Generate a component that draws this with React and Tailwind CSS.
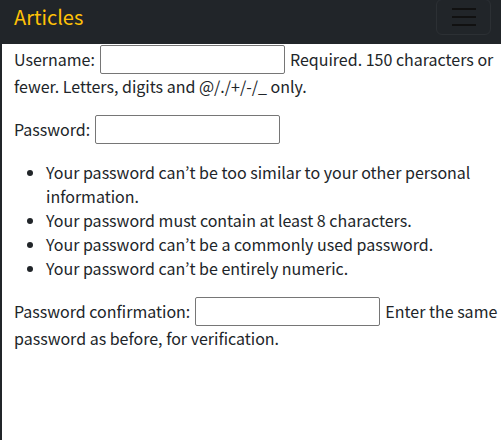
export default function App() {
    return (
        <div className="w-[501px] h-[440px] bg-white border-l-2 border-[#212529] font-['Noto_Sans_CJK_KR',sans-serif] text-[16px] leading-6 text-[#212529] overflow-hidden whitespace-nowrap">
            <nav className="h-[44px] bg-[#212529] flex items-start justify-between pl-3 pr-[10px]">
                <a className="text-[20px] leading-[30px] mt-[2px] text-[#ffc107]">Articles</a>
                <button className="w-[55px] h-[36px] -mt-px border border-[#2c3034] rounded-md flex flex-col items-center justify-center gap-[6px]">
                    <span className="block w-6 h-[2px] bg-[#111]" />
                    <span className="block w-6 h-[2px] bg-[#111]" />
                    <span className="block w-6 h-[2px] bg-[#111]" />
                </button>
            </nav>
            <form className="px-3">
                <div className="mb-4">
                    <div className="flex items-center h-[30px] gap-[5px]">
                        <label className="shrink-0">Username:</label>
                        <input className="shrink-0 w-[185px] h-[29px] border border-[#767676] rounded-[2px]" />
                        <span className="shrink-0">Required. 150 characters or</span>
                    </div>
                    <div>fewer. Letters, digits and @/./+/-/_ only.</div>
                </div>
                <div className="flex items-center h-[30px] gap-[5px] mb-4">
                    <label className="shrink-0">Password:</label>
                    <input type="password" className="shrink-0 w-[185px] h-[29px] border border-[#767676] rounded-[2px]" />
                </div>
                <ul className="list-disc pl-8 mb-4">
                    <li>Your password can’t be too similar to your other personal<br />information.</li>
                    <li>Your password must contain at least 8 characters.</li>
                    <li>Your password can’t be a commonly used password.</li>
                    <li>Your password can’t be entirely numeric.</li>
                </ul>
                <div>
                    <div className="flex items-center h-[30px] gap-[5px]">
                        <label className="shrink-0">Password confirmation:</label>
                        <input type="password" className="shrink-0 w-[185px] h-[29px] border border-[#767676] rounded-[2px]" />
                        <span className="shrink-0">Enter the same</span>
                    </div>
                    <div>password as before, for verification.</div>
                </div>
            </form>
        </div>
    );
}
